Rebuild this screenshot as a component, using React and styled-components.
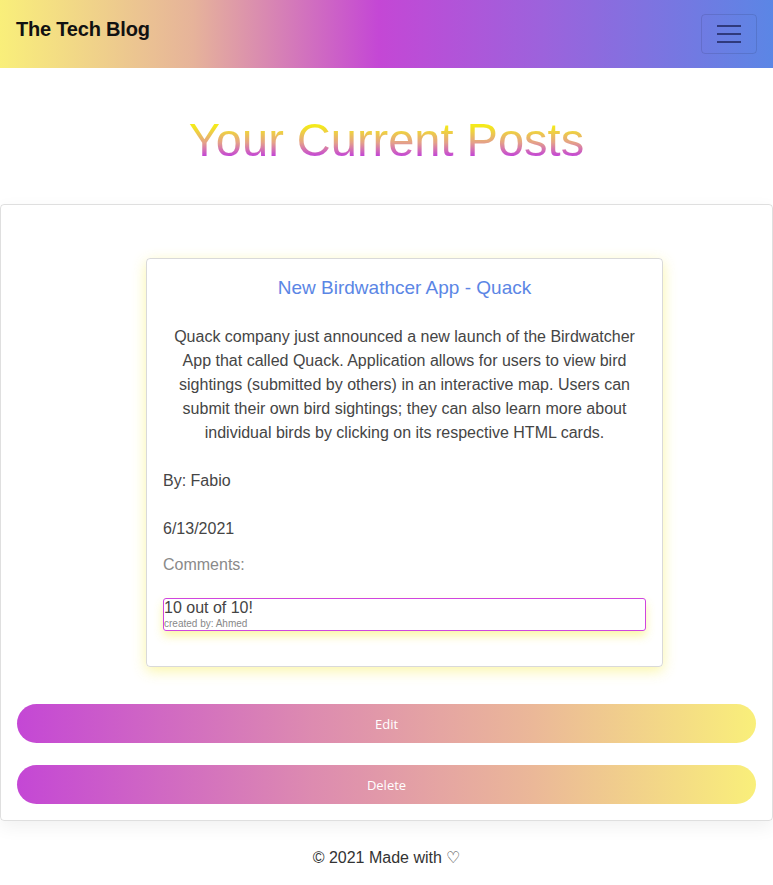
import styled, { createGlobalStyle } from "styled-components";

const GlobalStyle = createGlobalStyle`
  body {
    margin: 0;
    font-family: "Liberation Sans", Arial, sans-serif;
    color: #212529;
    background: #fff;
  }
  * { box-sizing: border-box; }
`;

const NavBar = styled.nav`
  height: 68px;
  display: flex;
  align-items: center;
  justify-content: space-between;
  padding: 0 16px;
  background: linear-gradient(90deg, #f9ef7a 0%, #e6b39a 25%, #c447d5 49%, #9d62dc 70%, #5b86e5 100%);
`;

const Brand = styled.a`
  font-size: 20px;
  font-weight: 700;
  color: #111;
  text-decoration: none;
  letter-spacing: -0.2px;
  margin-top: -10px;
`;

const Toggler = styled.button`
  width: 56px;
  height: 40px;
  border: 1px solid rgba(0, 0, 0, 0.1);
  border-radius: 4px;
  background: transparent;
  display: flex;
  flex-direction: column;
  justify-content: center;
  align-items: center;
  gap: 6px;

  & span {
    display: block;
    width: 24px;
    height: 2px;
    background: rgba(30, 35, 90, 0.75);
  }
`;

const Title = styled.h1`
  width: fit-content;
  margin: 44px auto 36px;
  text-align: center;
  font-family: "Liberation Sans", Arial, sans-serif;
  font-weight: 400;
  font-size: 47px;
  line-height: 56px;
  background: linear-gradient(180deg, #f4ea1a 25%, #e4a08a 55%, #c447d5 78%);
  -webkit-background-clip: text;
  background-clip: text;
  color: transparent;
`;

const OuterCard = styled.section`
  border: 1px solid rgba(0, 0, 0, 0.125);
  border-radius: 4px;
  padding: 53px 16px 16px;
  box-shadow: 0 6px 18px rgba(0, 0, 0, 0.06);
`;

const PostCard = styled.article`
  width: 517px;
  margin: 0 0 37px 129px;
  border: 1px solid rgba(0, 0, 0, 0.15);
  border-radius: 4px;
  padding: 17px 16px 35px;
  box-shadow: 0 4px 14px rgba(246, 236, 60, 0.45);
  color: #454545;
  font-size: 16px;
  line-height: 24px;
`;

const PostTitle = styled.h5`
  margin: 0 0 25px;
  text-align: center;
  font-weight: 400;
  font-size: 19px;
  line-height: 24px;
  color: #5b86e5;
`;

const PostBody = styled.p`
  margin: 0 0 24px;
  text-align: center;
  padding: 0 2px;
`;

const Meta = styled.p`
  margin: 0 0 24px;
`;

const CommentsLabel = styled.p`
  margin: -12px 0 21px;
  color: #8a8a8a;
`;

const CommentBox = styled.div`
  outline: 1px solid #cf45e0;
  outline-offset: -1px;
  border-radius: 3px;
  padding: 0 0 0 1px;
  height: 33px;
  box-shadow: 0 5px 10px rgba(246, 236, 60, 0.45);
`;

const CommentText = styled.div`
  font-size: 16px;
  line-height: 20px;
  color: #444;
`;

const CommentAuthor = styled.div`
  font-size: 10px;
  line-height: 11px;
  color: #888;
`;

const GradientButton = styled.button`
  display: block;
  width: 100%;
  height: 39px;
  border: none;
  border-radius: 20px;
  background: linear-gradient(90deg, #c447d5 0%, #dd8bb0 40%, #ebb898 70%, #f9ef7a 100%);
  color: #fff;
  font-family: "Open Sans", "DejaVu Sans", sans-serif;
  font-size: 13px;
  & + & {
    margin-top: 22px;
  }
`;

const Footer = styled.footer`
  text-align: center;
  font-size: 16px;
  color: #333;
  padding: 27px 0 20px;
`;

export default function App() {
  return (
    <>
      <GlobalStyle />
      <NavBar>
        <Brand href="#">The Tech Blog</Brand>
        <Toggler aria-label="menu">
          <span />
          <span />
          <span />
        </Toggler>
      </NavBar>
      <Title>Your Current Posts</Title>
      <OuterCard>
        <PostCard>
          <PostTitle>New Birdwathcer App - Quack</PostTitle>
          <PostBody>
            Quack company just announced a new launch of the Birdwatcher App that called Quack.
            Application allows for users to view bird sightings (submitted by others) in an
            interactive map. Users can submit their own bird sightings; they can also learn more
            about individual birds by clicking on its respective HTML cards.
          </PostBody>
          <Meta>By: Fabio</Meta>
          <Meta>6/13/2021</Meta>
          <CommentsLabel>Comments:</CommentsLabel>
          <CommentBox>
            <CommentText>10 out of 10!</CommentText>
            <CommentAuthor>created by: Ahmed</CommentAuthor>
          </CommentBox>
        </PostCard>
        <GradientButton>Edit</GradientButton>
        <GradientButton>Delete</GradientButton>
      </OuterCard>
      <Footer>© 2021 Made with ♡</Footer>
    </>
  );
}
